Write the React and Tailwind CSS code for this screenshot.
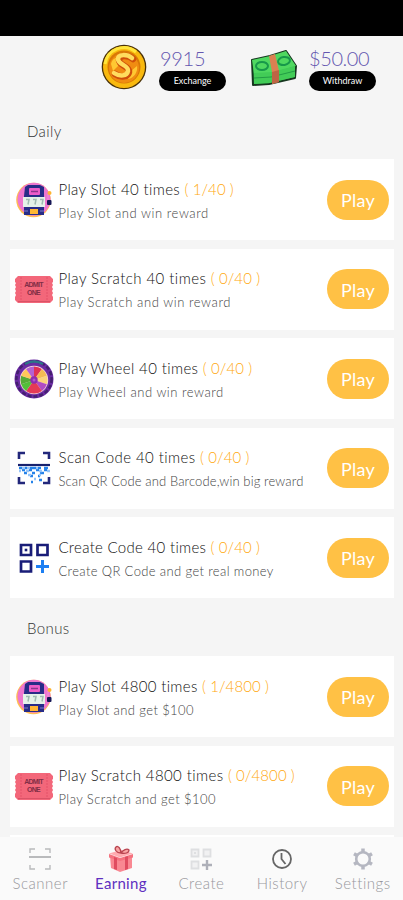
import { Fragment } from 'react'

function CoinIcon() {
  return (
    <svg viewBox="0 0 46 46" className="size-[46px] shrink-0">
      <circle cx="23" cy="23" r="22.3" fill="#4a3208" />
      <circle cx="23" cy="23" r="21" fill="#f9b90f" />
      <path d="M4 20a19 19 0 0 1 31-12" fill="none" stroke="#ffe53b" strokeWidth="3" />
      <circle cx="23" cy="23" r="16.5" fill="#d97806" />
      <circle cx="23" cy="24" r="15" fill="#f08c12" />
      <path d="M10 20c1-5 5-7 9-7l-2 9-5 5zM36 22c1 6-3 12-9 13l3-8z" fill="#ffc832" />
      <path d="M32 15c-5-4-14-4-14 1 0 6 11 6 10 12-1 5-8 6-14 2" fill="none" stroke="#cf4e0a" strokeWidth="6.5" strokeLinecap="round" />
      <path d="M31 14c-5-4-14-4-14 1 0 6 11 6 10 12-1 5-8 6-14 2" fill="none" stroke="#ffdc5e" strokeWidth="4.5" strokeLinecap="round" />
    </svg>
  )
}

function CashIcon() {
  return (
    <svg viewBox="0 0 48 38" className="h-[38px] w-12 shrink-0">
      <path d="M2 11l18-4L36 2l10 15-1 12-26 6-16 1z" fill="#29b347" stroke="#16361f" strokeWidth="2" strokeLinejoin="round" />
      <path d="M2 11l18-4L36 2l10 15-24 7-18 1z" fill="#4fd860" />
      <path d="M4 24l18-1 23-6v11l-25 6-16 1z" fill="#42cc57" />
      <path d="M4 29l17-1 24-6" fill="none" stroke="#229c45" strokeWidth="1" />
      <ellipse cx="12" cy="17" rx="6" ry="4" fill="none" stroke="#17984a" strokeWidth="2" />
      <ellipse cx="34" cy="12" rx="6" ry="4" fill="none" stroke="#17984a" strokeWidth="2" transform="rotate(-10 34 12)" />
      <path d="M19 7l6-2 4 17v11l-7 2V23z" fill="#db8052" />
      <path d="M22 23l7-2v12l-7 2z" fill="#bd6544" />
    </svg>
  )
}

function SlotIcon() {
  return (
    <svg viewBox="0 0 36 36" className="size-9">
      <circle cx="17.5" cy="18" r="17.3" fill="#ffbd52" />
      <circle cx="18" cy="17.3" r="16.5" fill="#ee76cf" />
      <path d="M9 5l3-2h12l4 2v28H8V14z" fill="#282c87" />
      <rect x="13" y="6" width="11" height="7" rx="1" fill="#ed5cc9" />
      <path d="M15 9.5h7" stroke="#8c358e" strokeWidth="1.5" />
      <rect x="7" y="15" width="22" height="10" fill="#e5f2e8" />
      <path d="M10 17.5h3l-1 5M17 17.5h3l-1 5M24 17.5h3l-1 5" fill="none" stroke="#a0bbb2" strokeWidth="1.5" />
      <rect x="14" y="27" width="8" height="5" fill="#ffb632" />
      <path d="M8 29h4M24 29h4" fill="none" stroke="#6262b5" strokeWidth="1.5" />
      <path d="M32 12v8" stroke="#ef83d4" strokeWidth="2" />
      <circle cx="33.5" cy="11" r="2" fill="#ffb32e" />
      <rect x="31" y="18" width="4.5" height="5" rx="1" fill="#161756" />
    </svg>
  )
}

function TicketIcon() {
  return (
    <div className="relative h-7 w-10">
      <svg viewBox="0 0 40 28" className="h-7 w-10">
        <path d="M4 1h32l3 3v3l-1 1 1 2-1 2 1 2-1 2 1 2-1 2 1 2v3l-3 3H4l-3-3v-3l1-2-1-2 1-2-1-2 1-2-1-2 1-2-1-1V4z" fill="#f3677a" />
        <path d="M7 2v24M33 2v24" stroke="#e45268" strokeWidth="1" strokeDasharray="2 1" />
        <path d="M4 26.5h32" stroke="#da5367" />
      </svg>
      <div className="absolute inset-0 flex flex-col items-center pt-1.5 font-['Liberation_Sans',sans-serif] text-[7px] leading-[8px] font-bold tracking-[-0.7px] text-[#812e46]">
        <span className="block h-2">ADMIT</span>
        <span className="block h-2">ONE</span>
      </div>
    </div>
  )
}

function WheelIcon() {
  const colors = ['#df3154', '#f4bb54', '#fbd47b', '#b04cc4', '#e53a55', '#e53a55', '#52bf39', '#55ac36', '#ffc85a', '#b361d3']
  return (
    <svg viewBox="0 0 40 40" className="size-10">
      <circle cx="20" cy="20" r="19.5" fill="#6b2ba3" />
      <circle cx="20" cy="20" r="17.6" fill="none" stroke="#44206f" strokeWidth="2.5" strokeDasharray="4 2" />
      <path d="M11 5q9-5 18 0" fill="none" stroke="#2d7587" strokeWidth="2.5" />
      <circle cx="20" cy="21" r="14.2" fill="#f4d4dc" />
      {colors.map((color, i) => (
        <path key={i} d="M20 21V7.5a13.5 13.5 0 0 1 7.9 2.6z" fill={color} transform={`rotate(${i * 36} 20 21)`} />
      ))}
      <circle cx="20" cy="21" r="3.7" fill="#8d2db0" />
      <circle cx="20" cy="21" r="1.5" fill="#b652ce" />
    </svg>
  )
}

function ScanIcon() {
  return (
    <svg viewBox="0 0 34 34" className="size-[34px]" fill="none">
      <path d="M2 8V2h6M26 2h6v6M32 26v6h-6M8 32H2v-6" stroke="#22277b" strokeWidth="2.6" />
      <path d="M1 14h32" stroke="#17216e" strokeWidth="2.2" />
      <path d="M2 17h3m3 0h2m3 0h6m2 0h3m3 0h4M5 19h3m4 0h3m4 0h3m5 0h3M7 22h3m5 0h3m5 0h4M13 25h3m5 0h2M22 29h3M14 31h2" stroke="#2582e9" strokeWidth="2.5" />
      <path d="M5 17h3m2 0h3m6 0h2M2 20h2m5 0h3m10 0h3m5 0h3M11 24h3m8 0h2M17 28h2" stroke="#96c5fa" strokeWidth="2.4" />
    </svg>
  )
}

function CreateIcon() {
  return (
    <svg viewBox="0 0 32 32" className="size-8" fill="none">
      <path d="M3 3h10v10H3zM19.5 3h10v10h-10zM3 19.5h10v10H3z" stroke="#191d78" strokeWidth="2.7" />
      <rect x="6.7" y="6.7" width="2.6" height="2.6" fill="#191d78" />
      <path d="M24.5 18v13M18 24.5h13" stroke="#1d7ff2" strokeWidth="3" />
    </svg>
  )
}

const daily = [
  { title: 'Play Slot 40 times', progress: '( 1/40 )', sub: 'Play Slot and win reward', Icon: SlotIcon, titleClass: 'tracking-[0.36px]', subClass: 'tracking-[0.55px]' },
  { title: 'Play Scratch 40 times', progress: '( 0/40 )', sub: 'Play Scratch and win reward', Icon: TicketIcon, titleClass: 'tracking-[0.45px]', subClass: 'tracking-[0.57px]' },
  { title: 'Play Wheel 40 times', progress: '( 0/40 )', sub: 'Play Wheel and win reward', Icon: WheelIcon, titleClass: 'tracking-[0.38px]', subClass: 'tracking-[0.52px]' },
  { title: 'Scan Code 40 times', progress: '( 0/40 )', sub: 'Scan QR Code and Barcode,win big reward', Icon: ScanIcon, titleClass: 'tracking-[0.43px]', subClass: 'tracking-[0.13px]' },
  { title: 'Create Code 40 times', progress: '( 0/40 )', sub: 'Create QR Code and get real money', Icon: CreateIcon, titleClass: 'tracking-[0.3px]', subClass: 'tracking-[0.37px]' },
]

const bonus = [
  { title: 'Play Slot 4800 times', progress: '( 1/4800 )', sub: 'Play Slot and get $100', Icon: SlotIcon, titleClass: 'tracking-[0.33px]', subClass: 'tracking-[0.4px]' },
  { title: 'Play Scratch 4800 times', progress: '( 0/4800 )', sub: 'Play Scratch and get $100', Icon: TicketIcon, titleClass: 'tracking-[0.4px]', subClass: 'tracking-[0.43px]' },
]

function TaskCard({ task }) {
  const { Icon } = task
  return (
    <div className="flex h-[81px] shrink-0 items-center bg-white pr-[5px] pl-[3px]">
      <div className="flex w-[41px] shrink-0 justify-center">
        <Icon />
      </div>
      <div className="ml-[4.5px] min-w-0 flex-1 pt-0.5 font-light whitespace-nowrap">
        <div className={`text-[15px] leading-5 text-[#111] ${task.titleClass}`}>
          {task.title} <span className="tracking-[0.1px] text-[#ffa90f]">{task.progress}</span>
        </div>
        <div className={`mt-1 text-[13px] leading-5 text-[#444] ${task.subClass}`}>{task.sub}</div>
      </div>
      <button className="h-10 w-[62px] shrink-0 rounded-full bg-[#ffc145] pt-0.5 text-[18px] tracking-[0.2px] text-white">Play</button>
    </div>
  )
}

function NavScanner() {
  return (
    <svg viewBox="0 0 24 24" className="size-6" fill="none" stroke="#b9babc" strokeWidth="1.4">
      <path d="M2 6V2h5M17 2h5v4M22 18v4h-5M7 22H2v-4" />
      <path d="M1 10h22" strokeWidth="2" />
    </svg>
  )
}

function GiftIcon() {
  return (
    <svg viewBox="0 0 28 28" className="size-7">
      <path d="M3 11l10 4 12-4v12l-12 4-9-4z" fill="#f98892" />
      <path d="M2 8.5L14 5l12 3.5-13 4z" fill="#ffabb0" />
      <path d="M2 9l11 4v3L2 12.5zM13 13l13-4v3.5L13 16z" fill="#f5727f" />
      <path d="M7 12l3 1v12l-3-1zM18 12l3-1v13l-3 1z" fill="#e04c60" />
      <path d="M14 8C9 8 7 4 9 2s5 2 5 6zm0 0c2-3 6-5 8-3 0 3-4 4-8 3z" fill="#f9a5a4" stroke="#b94450" strokeWidth="1.3" />
    </svg>
  )
}

function NavCreate() {
  return (
    <svg viewBox="0 0 24 24" className="size-6" fill="none">
      <path d="M2.5 2.5h7v7h-7zM14.5 2.5h7v7h-7zM2.5 14.5h7v7h-7z" fill="#f1f1f2" stroke="#dedfe1" strokeWidth="1.8" />
      <path d="M6 5v2" stroke="#dedfe1" strokeWidth="2" />
      <path d="M18 13v10M13 18h10" stroke="#aeb0b9" strokeWidth="2.4" />
    </svg>
  )
}

function HistoryIcon() {
  return (
    <svg viewBox="0 0 22 22" className="size-[22px]" fill="none" stroke="#666" strokeWidth="1.8">
      <circle cx="11" cy="11" r="9" />
      <path d="M10.5 5v6l4 5" />
    </svg>
  )
}

function SettingsIcon() {
  return (
    <svg viewBox="0 0 24 24" className="size-6" fill="none" stroke="#b5b7c1">
      <path d="M12 1.5v4M12 18.5v4M3 6.8l3.5 2M17.5 15.2l3.5 2M3 17.2l3.5-2M17.5 8.8l3.5-2" strokeWidth="3.5" />
      <circle cx="12" cy="12" r="6.8" strokeWidth="2.6" />
    </svg>
  )
}

const tabs = [
  { label: 'Scanner', Icon: NavScanner },
  { label: 'Earning', Icon: GiftIcon, active: true },
  { label: 'Create', Icon: NavCreate },
  { label: 'History', Icon: HistoryIcon },
  { label: 'Settings', Icon: SettingsIcon },
]

const sections = [
  { name: 'Daily', tasks: daily },
  { name: 'Bonus', tasks: bonus },
]

export default function App() {
  return (
    <div className="flex h-[900px] w-[403px] flex-col overflow-hidden bg-[#f5f5f5] font-['Lato','Liberation_Sans',sans-serif]">
      <div className="h-9 shrink-0 bg-black" />
      <header className="flex h-[65px] shrink-0 pt-2 pl-[101px]">
        <CoinIcon />
        <div className="ml-3 w-[67px]">
          <div className="mt-[3px] pl-px text-[20px] leading-[22px] font-light tracking-[-0.3px] text-[#6457b0]">9915</div>
          <button className="mt-0.5 flex h-5 w-[67px] items-center justify-center rounded-full bg-black text-[9px] text-white">Exchange</button>
        </div>
        <div className="mt-[5px] ml-6">
          <CashIcon />
        </div>
        <div className="ml-[11px] w-[67px]">
          <div className="mt-[3px] text-[20px] leading-[22px] font-light tracking-[-0.4px] text-[#6457b0]">$50.00</div>
          <button className="mt-0.5 flex h-5 w-[67px] items-center justify-center rounded-full bg-black text-[9px] text-white">Withdraw</button>
        </div>
      </header>
      <main className="min-h-0 flex-1 overflow-hidden pr-[9px] pl-[10px]">
        {sections.map(section => (
          <Fragment key={section.name}>
            <h2 className="flex h-[58px] items-center pt-0.5 pl-[17px] text-[15px] font-light tracking-[0.4px] text-[#333]">{section.name}</h2>
            <div className="flex flex-col gap-[8.5px]">
              {section.tasks.map(task => <TaskCard key={task.title} task={task} />)}
            </div>
          </Fragment>
        ))}
        <div className="mt-[8.5px] h-[81px] bg-white" />
      </main>
      <nav className="grid h-[63px] shrink-0 grid-cols-5 bg-[#fafafa]">
        {tabs.map(({ label, Icon, active }) => (
          <div key={label} className={`flex flex-col items-center text-[15px] leading-5 ${active ? 'text-[#5e2fc0]' : 'font-light text-[#98989c]'}`}>
            <div className="flex h-9 items-center pt-2">
              <Icon />
            </div>
            <span className={active ? 'tracking-[0.3px]' : 'tracking-[0.5px]'}>{label}</span>
          </div>
        ))}
      </nav>
    </div>
  )
}
